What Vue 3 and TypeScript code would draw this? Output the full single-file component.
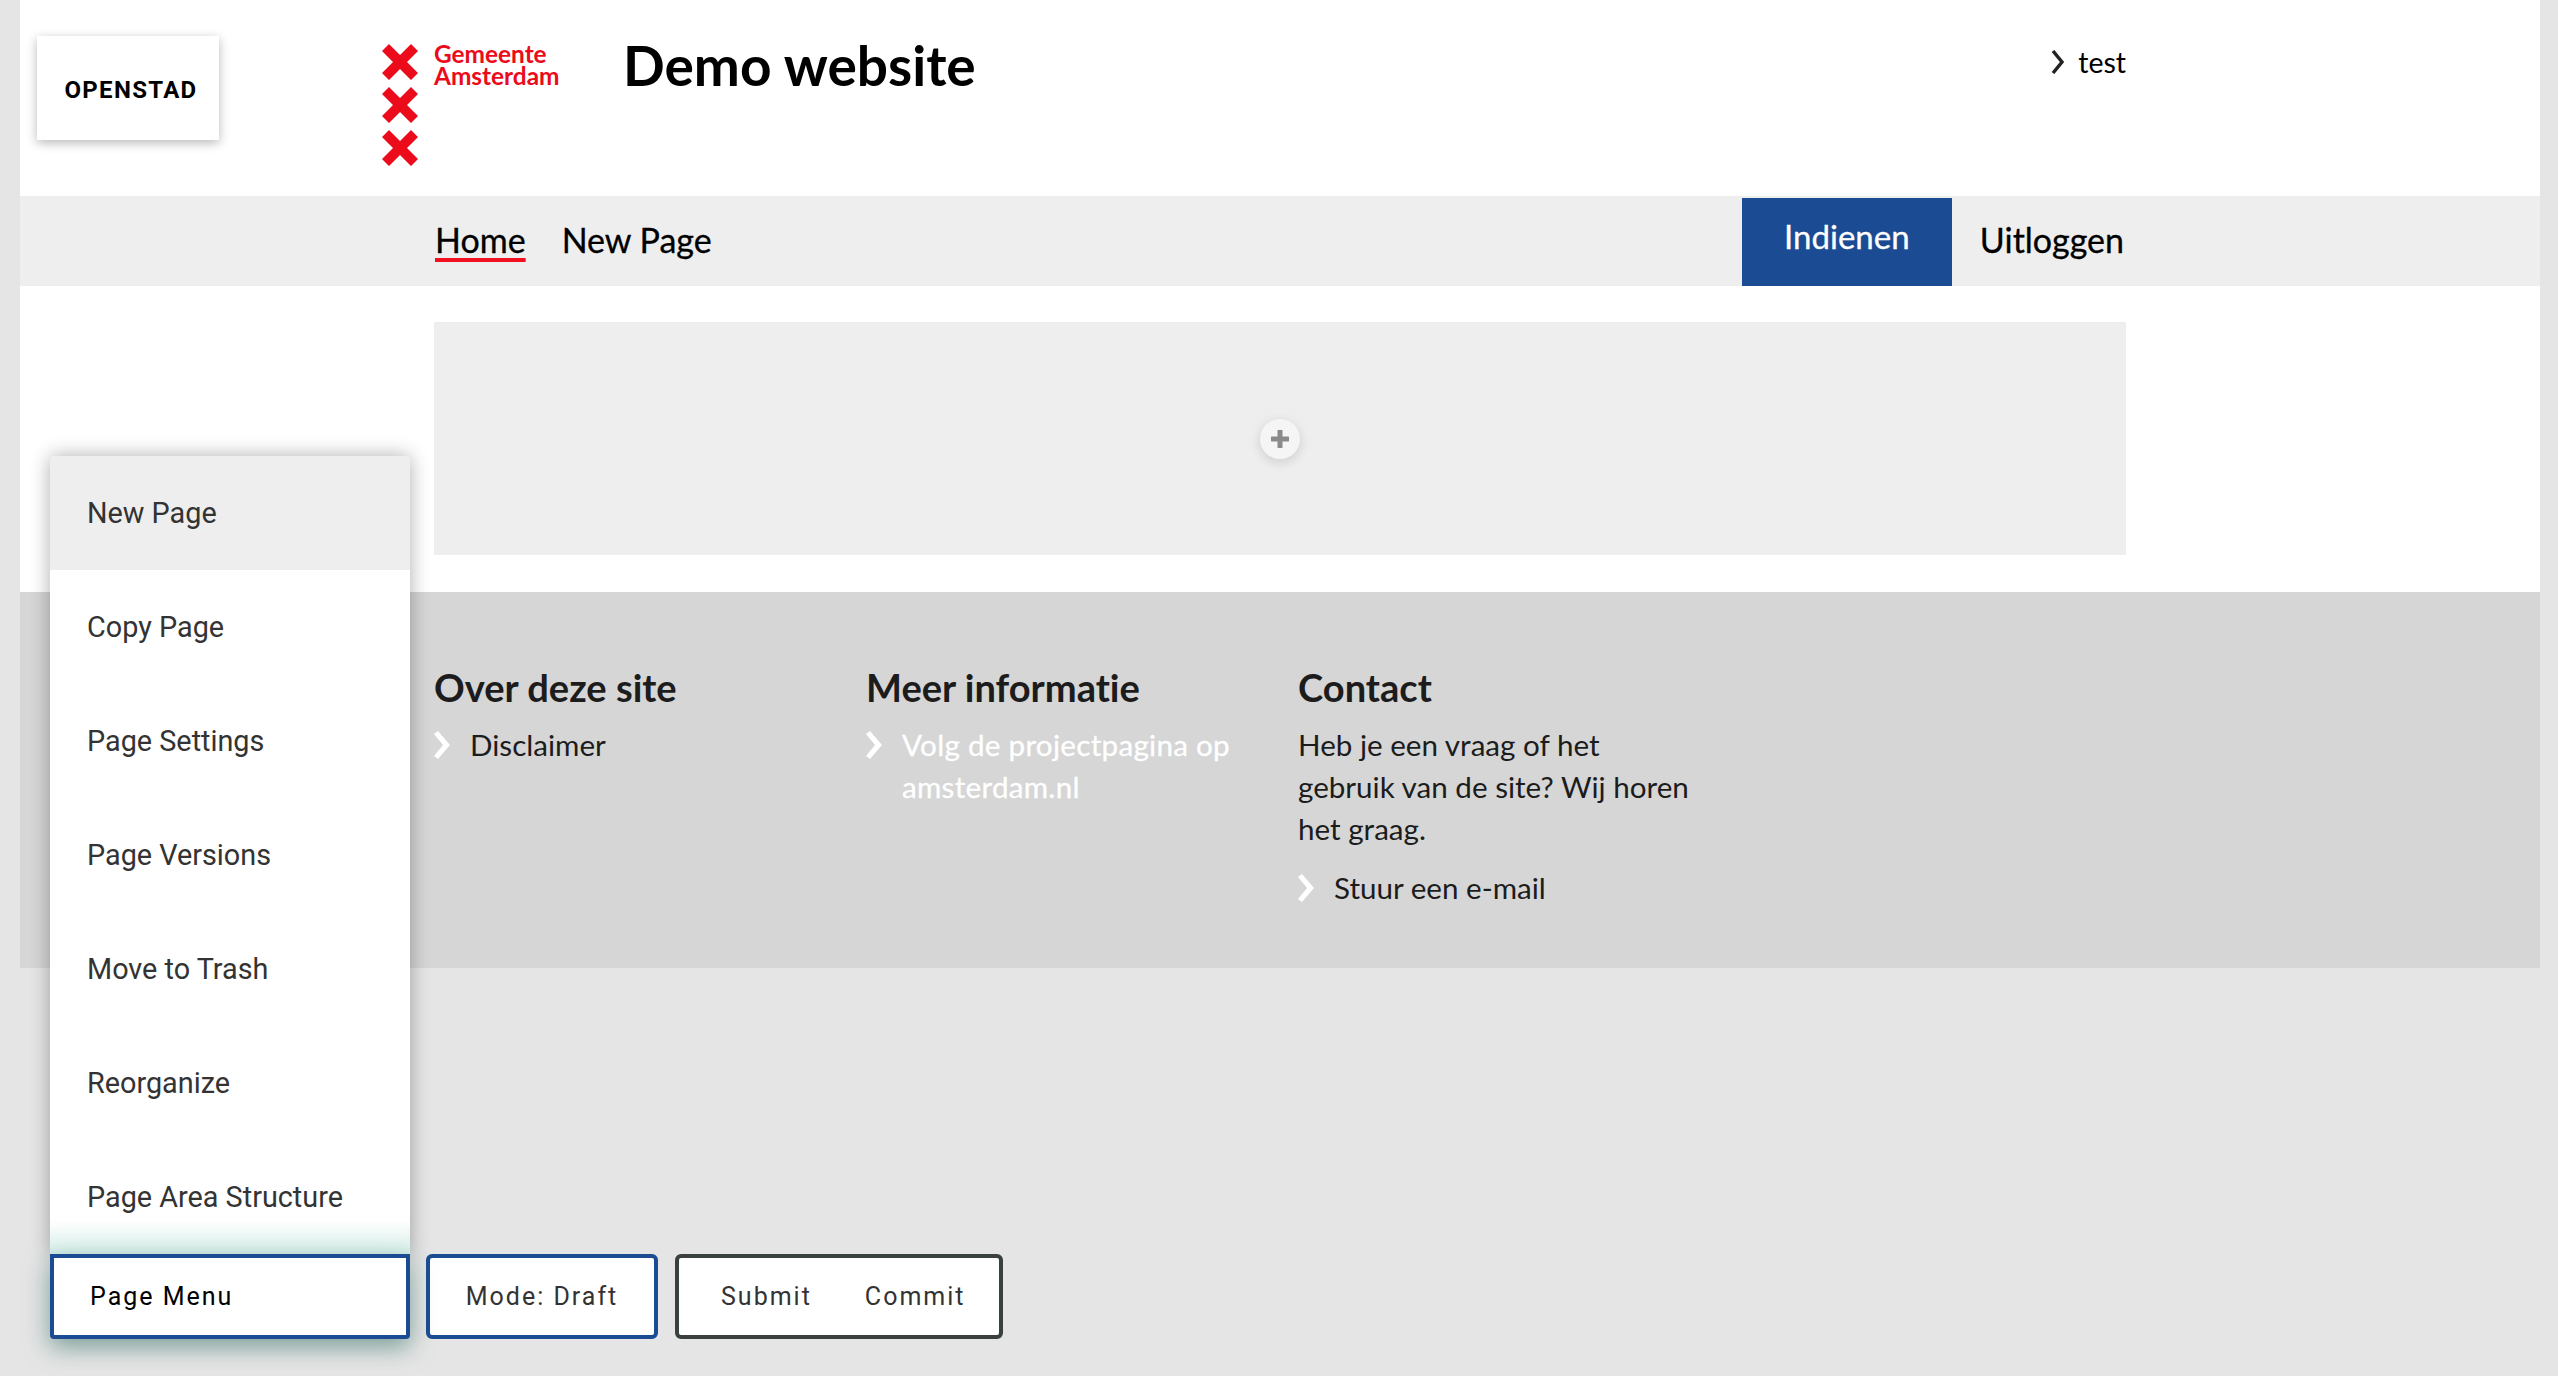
<script setup lang="ts">
const menuItems = ['New Page', 'Copy Page', 'Page Settings', 'Page Versions', 'Move to Trash', 'Reorganize', 'Page Area Structure']
const crosses = [0, 1, 2]
</script>

<template>
  <div class="site">
    <header class="header">
      <div class="logo">
        <div class="crosses">
          <svg v-for="c in crosses" :key="c" viewBox="0 0 36 36" width="36" height="36">
            <path d="M7 0 L18 11 L29 0 L36 7 L25 18 L36 29 L29 36 L18 25 L7 36 L0 29 L11 18 L0 7 Z" fill="#ec0b1a" />
          </svg>
        </div>
        <div class="logo-text">Gemeente<br />Amsterdam</div>
      </div>
      <h1 class="title">Demo website</h1>
      <a class="account">
        <svg viewBox="0 0 14 24" width="14" height="24"><path d="M2 1 L11 12 L2 23" fill="none" stroke="#222" stroke-width="3.4" /></svg>
        test
      </a>
    </header>

    <nav class="nav">
      <a class="nav-link active">Home</a>
      <a class="nav-link">New Page</a>
      <a class="submit-btn">Indienen</a>
      <a class="logout">Uitloggen</a>
    </nav>

    <main class="main">
      <div class="area">
        <button class="add-btn">
          <svg viewBox="0 0 18 18" width="18" height="18"><path d="M9 1 V17 M1 9 H17" stroke="#8a8a8a" stroke-width="5" stroke-linecap="round" /></svg>
        </button>
      </div>
    </main>

    <footer class="footer">
      <div class="col">
        <h3>Over deze site</h3>
        <a class="link">
          <svg viewBox="0 0 18 28" width="18" height="28"><path d="M0 3 L4 0 L16 14 L4 28 L0 25 L9 14 Z" fill="#fff" /></svg>
          <span>Disclaimer</span>
        </a>
      </div>
      <div class="col">
        <h3>Meer informatie</h3>
        <a class="link white">
          <svg viewBox="0 0 18 28" width="18" height="28"><path d="M0 3 L4 0 L16 14 L4 28 L0 25 L9 14 Z" fill="#fff" /></svg>
          <span>Volg de projectpagina op amsterdam.nl</span>
        </a>
      </div>
      <div class="col">
        <h3>Contact</h3>
        <p class="contact-text">Heb je een vraag of het gebruik van de site? Wij horen het graag.</p>
        <a class="link mail">
          <svg viewBox="0 0 18 28" width="18" height="28"><path d="M0 3 L4 0 L16 14 L4 28 L0 25 L9 14 Z" fill="#fff" /></svg>
          <span>Stuur een e-mail</span>
        </a>
      </div>
    </footer>

    <div class="openstad">OPENSTAD</div>

    <div class="admin">
      <div class="menu-wrap">
        <ul class="menu">
          <li v-for="(item, i) in menuItems" :key="item" :class="{ hover: i === 0 }">{{ item }}</li>
        </ul>
        <button class="bar-btn page-menu">Page Menu</button>
      </div>
      <button class="bar-btn mode">Mode: Draft</button>
      <div class="bar-btn commit">
        <span>Submit</span>
        <span>Commit</span>
      </div>
    </div>
  </div>
</template>

<style>
html,
body {
  margin: 0;
  background: #e5e5e5;
  overflow: hidden;
}
</style>

<style scoped>
.site {
  position: relative;
  height: 1376px;
  margin: 0 18px 0 20px;
  font-family: Lato, "Open Sans", sans-serif;
  font-variant-ligatures: none;
  color: #000;
}

.header {
  display: flex;
  align-items: flex-start;
  height: 196px;
  box-sizing: border-box;
  padding: 44px 414px 0 362px;
  background: #fff;
}

.logo {
  display: flex;
  gap: 16px;
  width: 241px;
}

.crosses {
  display: flex;
  flex-direction: column;
  gap: 7px;
}

.crosses svg {
  display: block;
}

.logo-text {
  margin-top: -1px;
  color: #ec0b1a;
  font-size: 24.4px;
  line-height: 22px;
  font-weight: 700;
}

.title {
  margin: -11px 0 0;
  font-size: 55px;
  line-height: 64px;
  font-weight: 700;
}

.account {
  display: flex;
  align-items: center;
  gap: 13px;
  margin-left: auto;
  font-size: 28.5px;
  line-height: 32px;
  padding-top: 2px;
}

.nav {
  display: flex;
  align-items: flex-end;
  height: 90px;
  padding: 0 416px 0 415px;
  background: #eee;
}

.nav-link,
.logout {
  font-size: 34px;
  line-height: 42px;
  margin-bottom: 25px;
  -webkit-text-stroke: 0.3px #000;
}

.nav-link {
  margin-right: 36px;
}

.nav-link.active {
  text-decoration: underline;
  text-decoration-color: #f0101f;
  text-decoration-thickness: 4px;
  text-underline-offset: 5px;
}

.submit-btn {
  display: block;
  box-sizing: border-box;
  width: 210px;
  height: 88px;
  margin-left: auto;
  padding-top: 17px;
  text-align: center;
  font-size: 33px;
  line-height: 42px;
  color: #fff;
  background: #1b4b92;
  -webkit-text-stroke: 0.3px #fff;
}

.logout {
  margin-left: 28px;
}

.main {
  padding: 36px 414px 37px;
  background: #fff;
}

.area {
  display: flex;
  align-items: center;
  justify-content: center;
  height: 233px;
  background: #eee;
}

.add-btn {
  display: flex;
  align-items: center;
  justify-content: center;
  width: 40px;
  height: 40px;
  padding: 0;
  border: 0;
  border-radius: 50%;
  background: #f5f5f5;
  box-shadow: 0 3px 12px rgba(0, 0, 0, 0.14);
}

.footer {
  display: flex;
  height: 376px;
  box-sizing: border-box;
  padding: 72px 0 0 414px;
  background: #d6d6d6;
  color: #1c1c1c;
}

.col {
  width: 432px;
}

.col h3 {
  margin: 0 0 14px;
  font-size: 38.1px;
  line-height: 46px;
  font-weight: 700;
}

.link {
  display: flex;
  gap: 18px;
  font-size: 29.6px;
  line-height: 42px;
  width: 390px;
}

.link svg {
  flex: none;
  margin-top: 7px;
}

.link.white {
  color: #fff;
  letter-spacing: 0.28px;
  -webkit-text-stroke: 0.3px #fff;
}

.contact-text {
  width: 400px;
  margin: 0 0 17px;
  font-size: 29.6px;
  line-height: 42px;
}

.openstad {
  position: absolute;
  top: 36px;
  left: 17px;
  display: flex;
  align-items: center;
  justify-content: center;
  box-sizing: border-box;
  width: 182px;
  height: 104px;
  padding: 3px 0 0 6px;
  background: #fff;
  box-shadow: 0 3px 10px rgba(0, 0, 0, 0.28);
  font-family: Roboto, sans-serif;
  font-size: 24px;
  font-weight: 700;
  letter-spacing: 1.3px;
}

.admin {
  position: absolute;
  left: 30px;
  top: 1254px;
  display: flex;
  gap: 16px;
  font-family: Roboto, sans-serif;
}

.menu-wrap {
  position: relative;
}

.menu {
  position: absolute;
  left: 0;
  bottom: 100%;
  width: 360px;
  margin: 0;
  padding: 0;
  list-style: none;
  background: linear-gradient(to top, #d8f0ea 0, #fff 34px);
  border-radius: 5px 5px 0 0;
  box-shadow: 0 0 20px rgba(0, 0, 0, 0.32);
}

.menu li {
  display: flex;
  align-items: center;
  height: 114px;
  padding-left: 37px;
  font-size: 28.8px;
  color: #333;
}

.menu li.hover {
  background: #eee;
  border-radius: 5px 5px 0 0;
}

.bar-btn {
  display: flex;
  align-items: center;
  box-sizing: border-box;
  height: 85px;
  background: #fff;
  border: 4px solid #1b4b92;
  border-radius: 6px;
  font-family: Roboto, sans-serif;
  font-size: 25px;
  letter-spacing: 2px;
  color: #333;
}

.page-menu {
  position: relative;
  width: 360px;
  padding: 0 0 0 36px;
  border-radius: 0 0 4px 4px;
  color: #000;
  box-shadow: 0 8px 24px rgba(50, 110, 100, 0.6);
}

.mode {
  width: 232px;
  justify-content: center;
  padding: 0;
}

.commit {
  width: 328px;
  margin-left: 1px;
  padding-left: 42px;
  gap: 53px;
  border-color: #3a3f3f;
}
</style>
